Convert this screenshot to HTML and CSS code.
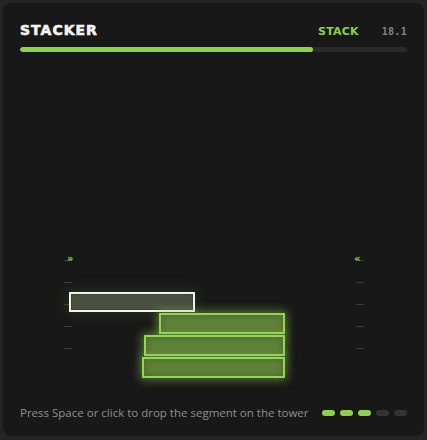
FILE: index.html
```html
<!DOCTYPE html>
<html>
<head>
<meta charset="utf-8">
<link rel="stylesheet" href="styles.css">
</head>
<body>
<div class="card">
  <div class="header">
    <div class="title">STACKER</div>
    <div class="meta">
      <span class="mode">STACK</span>
      <span class="time">18.1</span>
    </div>
  </div>
  <div class="progress"><div class="progress-fill" style="width:75.7%"></div></div>
  <div class="stage">
    <div class="tower">
      <div class="rail rail-left">
        <div class="tick tick-head"><span class="arrow">»</span></div>
        <div class="tick"></div>
        <div class="tick"></div>
        <div class="tick"></div>
        <div class="tick"></div>
      </div>
      <div class="rail rail-right">
        <div class="tick tick-head"><span class="arrow">«</span></div>
        <div class="tick"></div>
        <div class="tick"></div>
        <div class="tick"></div>
        <div class="tick"></div>
      </div>
      <div class="block moving" style="margin-left:5px;width:126px"></div>
      <div class="block placed" style="margin-left:95px;width:126px"></div>
      <div class="block placed" style="margin-left:80px;width:141px"></div>
      <div class="block placed" style="margin-left:78px;width:143px"></div>
    </div>
  </div>
  <div class="footer">
    <div class="hint">Press Space or click to drop the segment on the tower</div>
    <div class="dots">
      <span class="dot on"></span>
      <span class="dot on"></span>
      <span class="dot on"></span>
      <span class="dot"></span>
      <span class="dot"></span>
    </div>
  </div>
</div>
</body>
</html>
```

FILE: styles.css
```css
html, body {
  margin: 0;
  padding: 0;
  background: #252525;
}
body {
  width: 427px;
  height: 440px;
  overflow: hidden;
  font-family: "DejaVu Sans", sans-serif;
}
.card {
  margin: 3px;
  width: 421px;
  height: 433px;
  box-sizing: border-box;
  background: #181818;
  border-radius: 8px;
  padding: 18px 17px 16px;
  display: flex;
  flex-direction: column;
}
.header {
  display: flex;
  align-items: center;
  justify-content: space-between;
  height: 18px;
}
.title {
  color: #f4f4f4;
  font-weight: bold;
  font-size: 14px;
  letter-spacing: 1px;
  line-height: 18px;
  -webkit-text-stroke: 0.6px #f4f4f4;
}
.meta {
  display: flex;
  align-items: center;
  gap: 23px;
  padding-top: 2px;
}
.mode {
  color: #8fd14f;
  font-weight: bold;
  font-size: 11px;
  letter-spacing: 0.2px;
}
.time {
  color: #858585;
  font-family: "DejaVu Sans Mono", monospace;
  font-weight: bold;
  font-size: 10px;
  letter-spacing: 0.3px;
}
.progress {
  margin-top: 8px;
  height: 5px;
  border-radius: 3px;
  background: #2a2a2a;
  overflow: hidden;
}
.progress-fill {
  height: 100%;
  background: #8fd14f;
  border-radius: 3px;
}
.stage {
  flex: 1;
  display: flex;
  flex-direction: column;
  justify-content: flex-end;
  padding-bottom: 26px;
}
.tower {
  position: relative;
  margin-left: 44px;
  width: 300px;
  display: flex;
  flex-direction: column;
  gap: 1px;
}
.rail {
  position: absolute;
  top: -32px;
  width: 8px;
  display: flex;
  flex-direction: column;
  gap: 21px;
}
.rail-left { left: 0; }
.rail-right { left: 292px; }
.tick {
  position: relative;
  height: 1px;
  background: #3e3e3e;
}
.arrow {
  position: absolute;
  top: -7px;
  color: #8fd14f;
  font-size: 10px;
  line-height: 12px;
  font-weight: bold;
}
.rail-left .arrow { left: 3px; }
.rail-right .arrow { left: -2px; }
.block {
  position: relative;
  box-sizing: border-box;
  height: 21px;
}
.moving {
  height: 20px;
  border: 2px solid #f3f3f3;
  background: #4a5040;
  box-shadow: 0 0 16px 3px rgba(120, 170, 70, 0.14), inset 0 0 0 1px #3d4235;
}
.placed {
  border: 2px solid #92d651;
  background: #60823a;
  box-shadow: 0 0 10px 2px rgba(143, 209, 79, 0.5), inset 0 0 6px 2px #526f30;
}
.footer {
  display: flex;
  align-items: center;
  justify-content: space-between;
  height: 16px;
}
.hint {
  color: #909088;
  font-family: "Open Sans", sans-serif;
  font-size: 11.5px;
}
.dots {
  display: flex;
  gap: 5px;
  padding-top: 1px;
}
.dot {
  width: 13px;
  height: 6px;
  border-radius: 3px;
  background: #333333;
}
.dot.on {
  background: #8fd14f;
}
```
